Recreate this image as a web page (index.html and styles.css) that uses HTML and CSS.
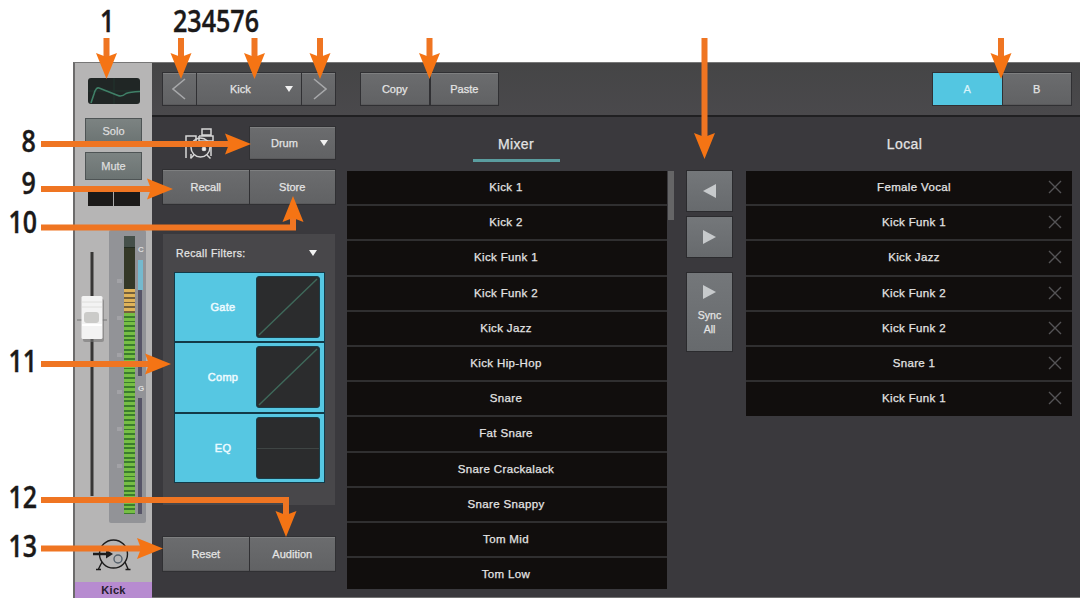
FILE: index.html
```
<!DOCTYPE html>
<html lang="en">
<head>
<meta charset="utf-8">
<title>Fat Channel presets</title>
<link rel="stylesheet" href="styles.css">
</head>
<body>
<div class="page">
<div class="app">
  <aside class="strip">
    <div class="curve"><svg width="52" height="26" viewBox="0 0 52 26"><path d="M0 13H52M26 0V26" stroke="#21342f"/><path d="M3 25 6 16Q8 9 11 10L30 17.500Q34 19 38 15.500Q42 14 52 13.500" fill="none" stroke="#3f8067" stroke-width="1.600"/></svg></div>
    <button class="sbtn solo">Solo</button>
    <button class="sbtn mute">Mute</button>
    <div class="pan"><span></span><span></span></div>
    <div class="levels">
      <div class="fader">
        <svg width="34" height="293" viewBox="0 0 34 293"><rect x="15.500" y="22" width="3" height="244" fill="#373635"/><path d="M2 90H32" stroke="#777"/><rect x="8" y="69" width="21" height="43" rx="2" fill="#777" opacity=".6"/><rect x="6.500" y="66" width="21" height="43" rx="1.500" fill="#f3f3f3"/><path d="M7 72H27M7 77H27" stroke="#dededc"/><rect x="9" y="82" width="15" height="11" rx="3" fill="#cbcbc9"/><path d="M7 95H27" stroke="#fff" stroke-width="2"/></svg>
      </div>
      <div class="meter-panel">
        <div class="ticks"><i></i><i></i><i></i><i></i><i></i><i></i></div>
        <div class="meter"><div class="off"></div><div class="hot"></div><div class="safe"></div></div>
        <div class="dyn"><b>C</b><div class="gr"></div><div class="bar one"></div><b class="g">G</b><div class="bar two"></div></div>
      </div>
    </div>
    <div class="source">
      <svg width="42" height="36" viewBox="0 0 42 36" fill="none" stroke="#1d1c1c" stroke-width="1.400"><circle cx="22.500" cy="16" r="14"/><circle cx="27" cy="21" r="4" stroke="#55616c"/><path d="M11 24 7 32M34 24 37.500 32M5 31.500H10M34.500 31.500H39.500"/><path d="M2 16H16" stroke-width="2.500"/><path d="M15 11.500 22 16 15 20.500Z" fill="#1d1c1c" stroke="none"/></svg>
    </div>
    <div class="name">Kick</div>
  </aside>
  <main class="main">
    <header class="bar-top">
      <div class="group nav">
        <button class="btn step"><svg width="16" height="24" viewBox="0 0 16 24"><path d="M13 2 1 12 13 22"/></svg></button>
        <button class="btn preset"><span>Kick</span><i class="caret"></i></button>
        <button class="btn step"><svg width="16" height="24" viewBox="0 0 16 24"><path d="M3 2 15 12 3 22"/></svg></button>
      </div>
      <div class="group clip"><button class="btn">Copy</button><button class="btn">Paste</button></div>
      <div class="group ab"><button class="btn on">A</button><button class="btn">B</button></div>
    </header>
    <div class="body">
      <section class="tools">
        <div class="type-row">
          <svg class="kit" width="30" height="32" viewBox="0 0 30 32" fill="none" stroke="#d6d6d6" stroke-width="1.500"><path d="M1 30V8H11V14H1M17 1H26V7H17ZM14 8H28V13H14M14 8V13M26 13V28M6 30V26"/><circle cx="15.500" cy="19.500" r="9.500"/><circle cx="19" cy="21" r="1.600" fill="#fff"/><path d="M9 27 5.500 30.500M22 27 25.500 30.500"/></svg>
          <button class="btn type"><span>Drum</span><i class="caret"></i></button>
        </div>
        <div class="group pair"><button class="btn">Recall</button><button class="btn">Store</button></div>
        <div class="filters">
          <div class="filters-head"><span>Recall Filters:</span><i class="caret"></i></div>
          <div class="filter-list">
            <div class="filter"><span>Gate</span><svg width="64" height="62" viewBox="0 0 64 62"><path d="M2 60 62 2"/></svg></div>
            <div class="filter"><span>Comp</span><svg width="64" height="62" viewBox="0 0 64 62"><path d="M2 60 62 2"/></svg></div>
            <div class="filter"><span>EQ</span><svg width="64" height="62" viewBox="0 0 64 62"><path class="flat" d="M0 31.500H64"/></svg></div>
          </div>
        </div>
        <div class="group pair"><button class="btn">Reset</button><button class="btn">Audition</button></div>
      </section>
      <section class="mixer">
        <h2><span class="tab">Mixer</span></h2>
        <div class="scroller">
          <ul class="list full">
            <li>Kick 1</li><li>Kick 2</li><li>Kick Funk 1</li><li>Kick Funk 2</li><li>Kick Jazz</li><li>Kick Hip-Hop</li><li>Snare</li><li>Fat Snare</li><li>Snare Crackalack</li><li>Snare Snappy</li><li>Tom Mid</li><li>Tom Low</li>
          </ul>
          <div class="thumb"></div>
        </div>
      </section>
      <section class="transfer">
        <button class="tbtn"><i class="left"></i></button>
        <button class="tbtn"><i class="right"></i></button>
        <button class="tbtn sync"><i class="right"></i><span>Sync<br>All</span></button>
      </section>
      <section class="local">
        <h2>Local</h2>
        <ul class="list">
          <li>Female Vocal<svg class="x" viewBox="0 0 14 14"><path d="M1 1 13 13M13 1 1 13"/></svg></li>
          <li>Kick Funk 1<svg class="x" viewBox="0 0 14 14"><path d="M1 1 13 13M13 1 1 13"/></svg></li>
          <li>Kick Jazz<svg class="x" viewBox="0 0 14 14"><path d="M1 1 13 13M13 1 1 13"/></svg></li>
          <li>Kick Funk 2<svg class="x" viewBox="0 0 14 14"><path d="M1 1 13 13M13 1 1 13"/></svg></li>
          <li>Kick Funk 2<svg class="x" viewBox="0 0 14 14"><path d="M1 1 13 13M13 1 1 13"/></svg></li>
          <li>Snare 1<svg class="x" viewBox="0 0 14 14"><path d="M1 1 13 13M13 1 1 13"/></svg></li>
          <li>Kick Funk 1<svg class="x" viewBox="0 0 14 14"><path d="M1 1 13 13M13 1 1 13"/></svg></li>
        </ul>
      </section>
    </div>
  </main>
</div>
<svg class="callouts" width="1081" height="601" viewBox="0 0 1081 601">
  <defs><path id="head" d="M0 0-10.500-26 0-22 10.500-26Z"/></defs>
  <g class="lines">
    <path d="M106.500 38V60M181 38V60M254.500 38V60M320 38V60M429.500 38V60M704.500 38V138M1001 38V60"/>
    <path d="M41 144H232M41 189H154M41 227.500H293V214M41 364H152M41 500H286V515M41 548.500H144"/>
  </g>
  <g class="heads">
    <use href="#head" x="106.500" y="79"/><use href="#head" x="181" y="79"/><use href="#head" x="254.500" y="79"/><use href="#head" x="320" y="79"/><use href="#head" x="429.500" y="79"/><use href="#head" x="704.500" y="159"/><use href="#head" x="1001" y="79"/>
    <use href="#head" transform="translate(251 144) rotate(-90)"/><use href="#head" transform="translate(173 189) rotate(-90)"/><use href="#head" transform="translate(293 196) rotate(180)"/><use href="#head" transform="translate(171 364) rotate(-90)"/><use href="#head" x="286" y="537"/><use href="#head" transform="translate(163 548.500) rotate(-90)"/>
  </g>
  <g class="nums">
    <text x="100" y="31.500" textLength="14.300" lengthAdjust="spacingAndGlyphs">1</text>
    <text x="173" y="31.500" textLength="86" lengthAdjust="spacingAndGlyphs">234576</text>
    <text x="21.500" y="151.500" textLength="14.300" lengthAdjust="spacingAndGlyphs">8</text>
    <text x="21.500" y="194" textLength="14.300" lengthAdjust="spacingAndGlyphs">9</text>
    <text x="8.500" y="232.500" textLength="28.500" lengthAdjust="spacingAndGlyphs">10</text>
    <text x="8.500" y="371.500" textLength="28.500" lengthAdjust="spacingAndGlyphs">11</text>
    <text x="8.500" y="507.500" textLength="28.500" lengthAdjust="spacingAndGlyphs">12</text>
    <text x="8.500" y="557" textLength="28.500" lengthAdjust="spacingAndGlyphs">13</text>
  </g>
</svg>
</div>
</body>
</html>
```
FILE: styles.css
```
* { box-sizing: border-box; }
body { margin: 0; background: #fff; font-family: "Liberation Sans", Arial, sans-serif; }
button { font: inherit; color: inherit; border: 0; margin: 0; padding: 0; }
h2 { margin: 0; font-weight: 400; }
ul { margin: 0; padding: 0; list-style: none; }
svg { display: block; }

.page { position: relative; width: 1081px; height: 601px; padding: 62px 1px 3px 73px; overflow: hidden; }
.app { display: flex; width: 1007px; height: 536px; color: #e4e4e4; font-size: 11px; letter-spacing: .3px; -webkit-text-stroke: .25px currentColor; }

.strip { width: 79px; display: flex; flex-direction: column; align-items: center; background: #b6b5b5; border-left: 2px solid #6c6b6b; border-top: 1px solid #777; padding-top: 15px; }
.curve { width: 52px; height: 26px; background: #202625; border-radius: 3px; overflow: hidden; }
.sbtn { width: 57px; height: 28px; background: linear-gradient(#7c8382, #6b7372); border: 1px solid #4e5455; color: #dedede; font-size: 11px; }
.solo { margin-top: 14px; }
.mute { margin-top: 7px; }
.pan { display: flex; gap: 1px; width: 52px; height: 18px; margin-top: 8px; background: #aaa; }
.pan span { flex: 1; background: #1c1a19; }
.levels { display: flex; width: 77px; height: 293px; margin-top: 24px; }
.fader { width: 34px; }
.meter-panel { display: flex; width: 37px; height: 293px; padding: 6px 2px 0 3px; background: #929397; border-radius: 2px; }
.ticks { width: 12px; padding: 43px 0 0 5px; }
.ticks i { display: block; width: 5px; height: 4px; margin-bottom: 33px; background: #a2a2a6; }
.meter { width: 11px; height: 278px; background: #303822; }
.off { height: 53px; background: linear-gradient(#45504a 0 11px, #222b20 11px 12px, #343827 12px); }
.hot { height: 24px; background: repeating-linear-gradient(#dfb35a 0 3px, #74603b 3px 4.800px); }
.safe { height: 201px; background: repeating-linear-gradient(#77bf45 0 2.800px, #3b7c2d 2.800px 4.700px); }
.dyn { width: 8px; padding-left: 3px; }
.dyn b { display: block; width: 5px; height: 24px; padding-top: 10px; font-size: 8px; line-height: 8px; color: #ddd; letter-spacing: 0; -webkit-text-stroke: 0; }
.dyn b.g { height: 22px; padding-top: 9px; }
.gr { width: 5px; height: 30px; background: #74b9ce; }
.bar { width: 4px; background: #565467; }
.one { height: 86px; }
.two { height: 116px; }
.source { height: 60px; width: 77px; padding: 15px 0 0 16px; }
.name { width: 77px; flex: 1; background: #b78bd0; color: #261c2d; font-weight: 700; text-align: center; line-height: 16px; -webkit-text-stroke: 0; }

.main { width: 928px; display: flex; flex-direction: column; background: #3a393d; border-bottom: 1px solid #737373; }
.bar-top { display: flex; height: 55px; padding: 10px 8px 0 11px; background: linear-gradient(#454546, #4a494c); border-top: 1px solid #777; border-bottom: 2px solid #202022; }
.group { display: flex; gap: 1px; padding: 1px; margin: -1px; background: #303033; }
.btn { display: flex; align-items: center; justify-content: center; background: linear-gradient(#6b6c6e, #616264); border-top: 1px solid #7e7f80; border-bottom: 1px solid #59595b; flex: 1; }
.btn.on { background: #53c6e1; border-color: #53c6e1; color: #d9f4fb; }
.bar-top .group { height: 34px; }
.nav { width: 174px; }
.nav .step { flex: 0 0 33px; }
.nav .step svg { fill: none; stroke: #a7a8aa; stroke-width: 1.600; }
.preset { padding: 0 8px 0 33px; justify-content: space-between; }
.caret { width: 0; height: 0; border: 4.500px solid transparent; border-top: 6px solid #f1f1f1; border-bottom: 0; }
.clip { width: 139px; gap: 2px; margin-left: 25px; }
.ab { width: 140px; margin-left: auto; margin-right: 0; }

.body { display: flex; flex: 1; min-height: 0; }
.tools { width: 195px; padding: 10px 12px 0 11px; }
.type-row { display: flex; justify-content: space-between; padding-left: 22px; height: 32px; }
.kit { margin-top: 1px; }
.type { flex: 0 0 85px; padding: 0 7px 0 21px; justify-content: space-between; outline: 1px solid #303033; }
.pair { width: 174px; height: 36px; margin-top: 10px; }
.filters { width: 172px; height: 271px; margin: 30px 0 31px; padding: 0 10px 0 11px; background: #48474a; }
.filters-head { display: flex; align-items: center; justify-content: space-between; height: 38px; padding: 0 8px 0 2px; font-size: 10.500px; letter-spacing: .4px; }
.filter-list { display: flex; flex-direction: column; gap: 2px; padding: 1px; background: #123a48; }
.filter { display: flex; align-items: center; height: 68.300px; padding-right: 4px; background: #56c7e2; color: #ebfaff; -webkit-text-stroke: .5px currentColor; }
.filter span { flex: 1; padding-left: 15px; text-align: center; }
.filter svg { background: #2b2c2d; border: 1px solid #193d48; border-radius: 3px; stroke: #3f695a; stroke-width: 1.500; }
.filter .flat { stroke: #414846; stroke-width: 1; }

.mixer { width: 328px; }
.mixer h2, .local h2 { height: 54px; padding-top: 19px; text-align: center; font-size: 14px; line-height: 17px; letter-spacing: .4px; }
.tab { display: inline-block; width: 87px; height: 26px; margin-left: 10px; border-bottom: 3px solid #5a9d9f; }
.scroller { display: flex; gap: 1px; }
.list li { position: relative; height: 35.200px; border-bottom: 2px solid #302f30; background: #110e0d; text-align: center; font-size: 11.500px; line-height: 33px; letter-spacing: .35px; }
.list li:last-child { border-bottom: 0; height: 34px; }
.full { width: 320px; }
.full li { padding-right: 2px; }
.full li:last-child { height: 31px; }
.thumb { width: 6px; height: 49px; background: #656566; }
.transfer { width: 71px; padding: 54px 14px 0 12px; display: flex; flex-direction: column; }
.tbtn { display: flex; flex-direction: column; align-items: center; justify-content: center; height: 40px; margin-bottom: 6px; background: linear-gradient(#74777a, #676a6d); outline: 1px solid #2b2b2e; }
.sync { height: 78px; margin-top: 10px; justify-content: flex-start; padding-top: 12px; line-height: 13.500px; font-size: 10.500px; }
.sync span { margin-top: 10px; }
.left, .right { width: 0; height: 0; border: 7.500px solid transparent; }
.left { border-left: 0; border-right: 13px solid #c7cacc; }
.right { border-right: 0; border-left: 13px solid #c7cacc; }
.local { width: 326px; }
.local h2 { padding-right: 9px; }
.local li { padding-left: 10px; }
.x { position: absolute; right: 10px; top: 9px; width: 14px; height: 14px; stroke: #555456; stroke-width: 1.400; }

.callouts { position: absolute; left: 0; top: 0; }
.lines { fill: none; stroke: #ef7522; stroke-width: 6; stroke-linecap: butt; }
.heads { fill: #f57414; }
.nums { font: 600 31px "Open Sans", "Noto Sans", sans-serif; fill: #1b1919; stroke: #1b1919; stroke-width: .4; }
```
